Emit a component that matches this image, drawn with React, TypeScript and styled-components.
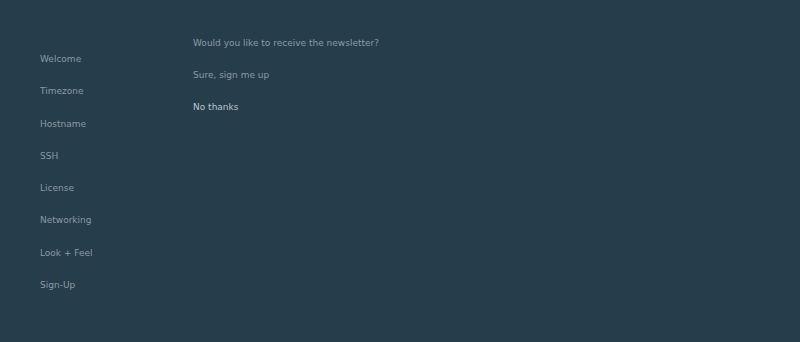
import React from "react";
import styled, { createGlobalStyle } from "styled-components";

const Global = createGlobalStyle`
  html, body { margin: 0; padding: 0; background: #263d4b; }
  body { font-family: "DejaVu Sans", sans-serif; }
`;

const Page = styled.div`
  display: flex;
  width: 800px;
  height: 342px;
  background: #263d4b;
  box-sizing: border-box;
  padding: 37px 0 0 40px;
`;

const Sidebar = styled.nav`
  display: flex;
  flex-direction: column;
  width: 153px;
  padding-top: 16px;
`;

const NavItem = styled.div`
  font-size: 9px;
  line-height: 12px;
  height: 32.3px;
  color: #8a9ba6;
`;

const Main = styled.main`
  display: flex;
  flex-direction: column;
`;

const Line = styled.div<{ $bright?: boolean }>`
  font-size: 9px;
  line-height: 12px;
  height: 32px;
  color: ${(p) => (p.$bright ? "#bcc6cc" : "#8a9ba6")};
`;

const items = ["Welcome", "Timezone", "Hostname", "SSH", "License", "Networking", "Look + Feel", "Sign-Up"];

export default function App() {
  return (
    <>
      <Global />
      <Page>
        <Sidebar>
          {items.map((i) => (
            <NavItem key={i}>{i}</NavItem>
          ))}
        </Sidebar>
        <Main>
          <Line>Would you like to receive the newsletter?</Line>
          <Line>Sure, sign me up</Line>
          <Line $bright>No thanks</Line>
        </Main>
      </Page>
    </>
  );
}
